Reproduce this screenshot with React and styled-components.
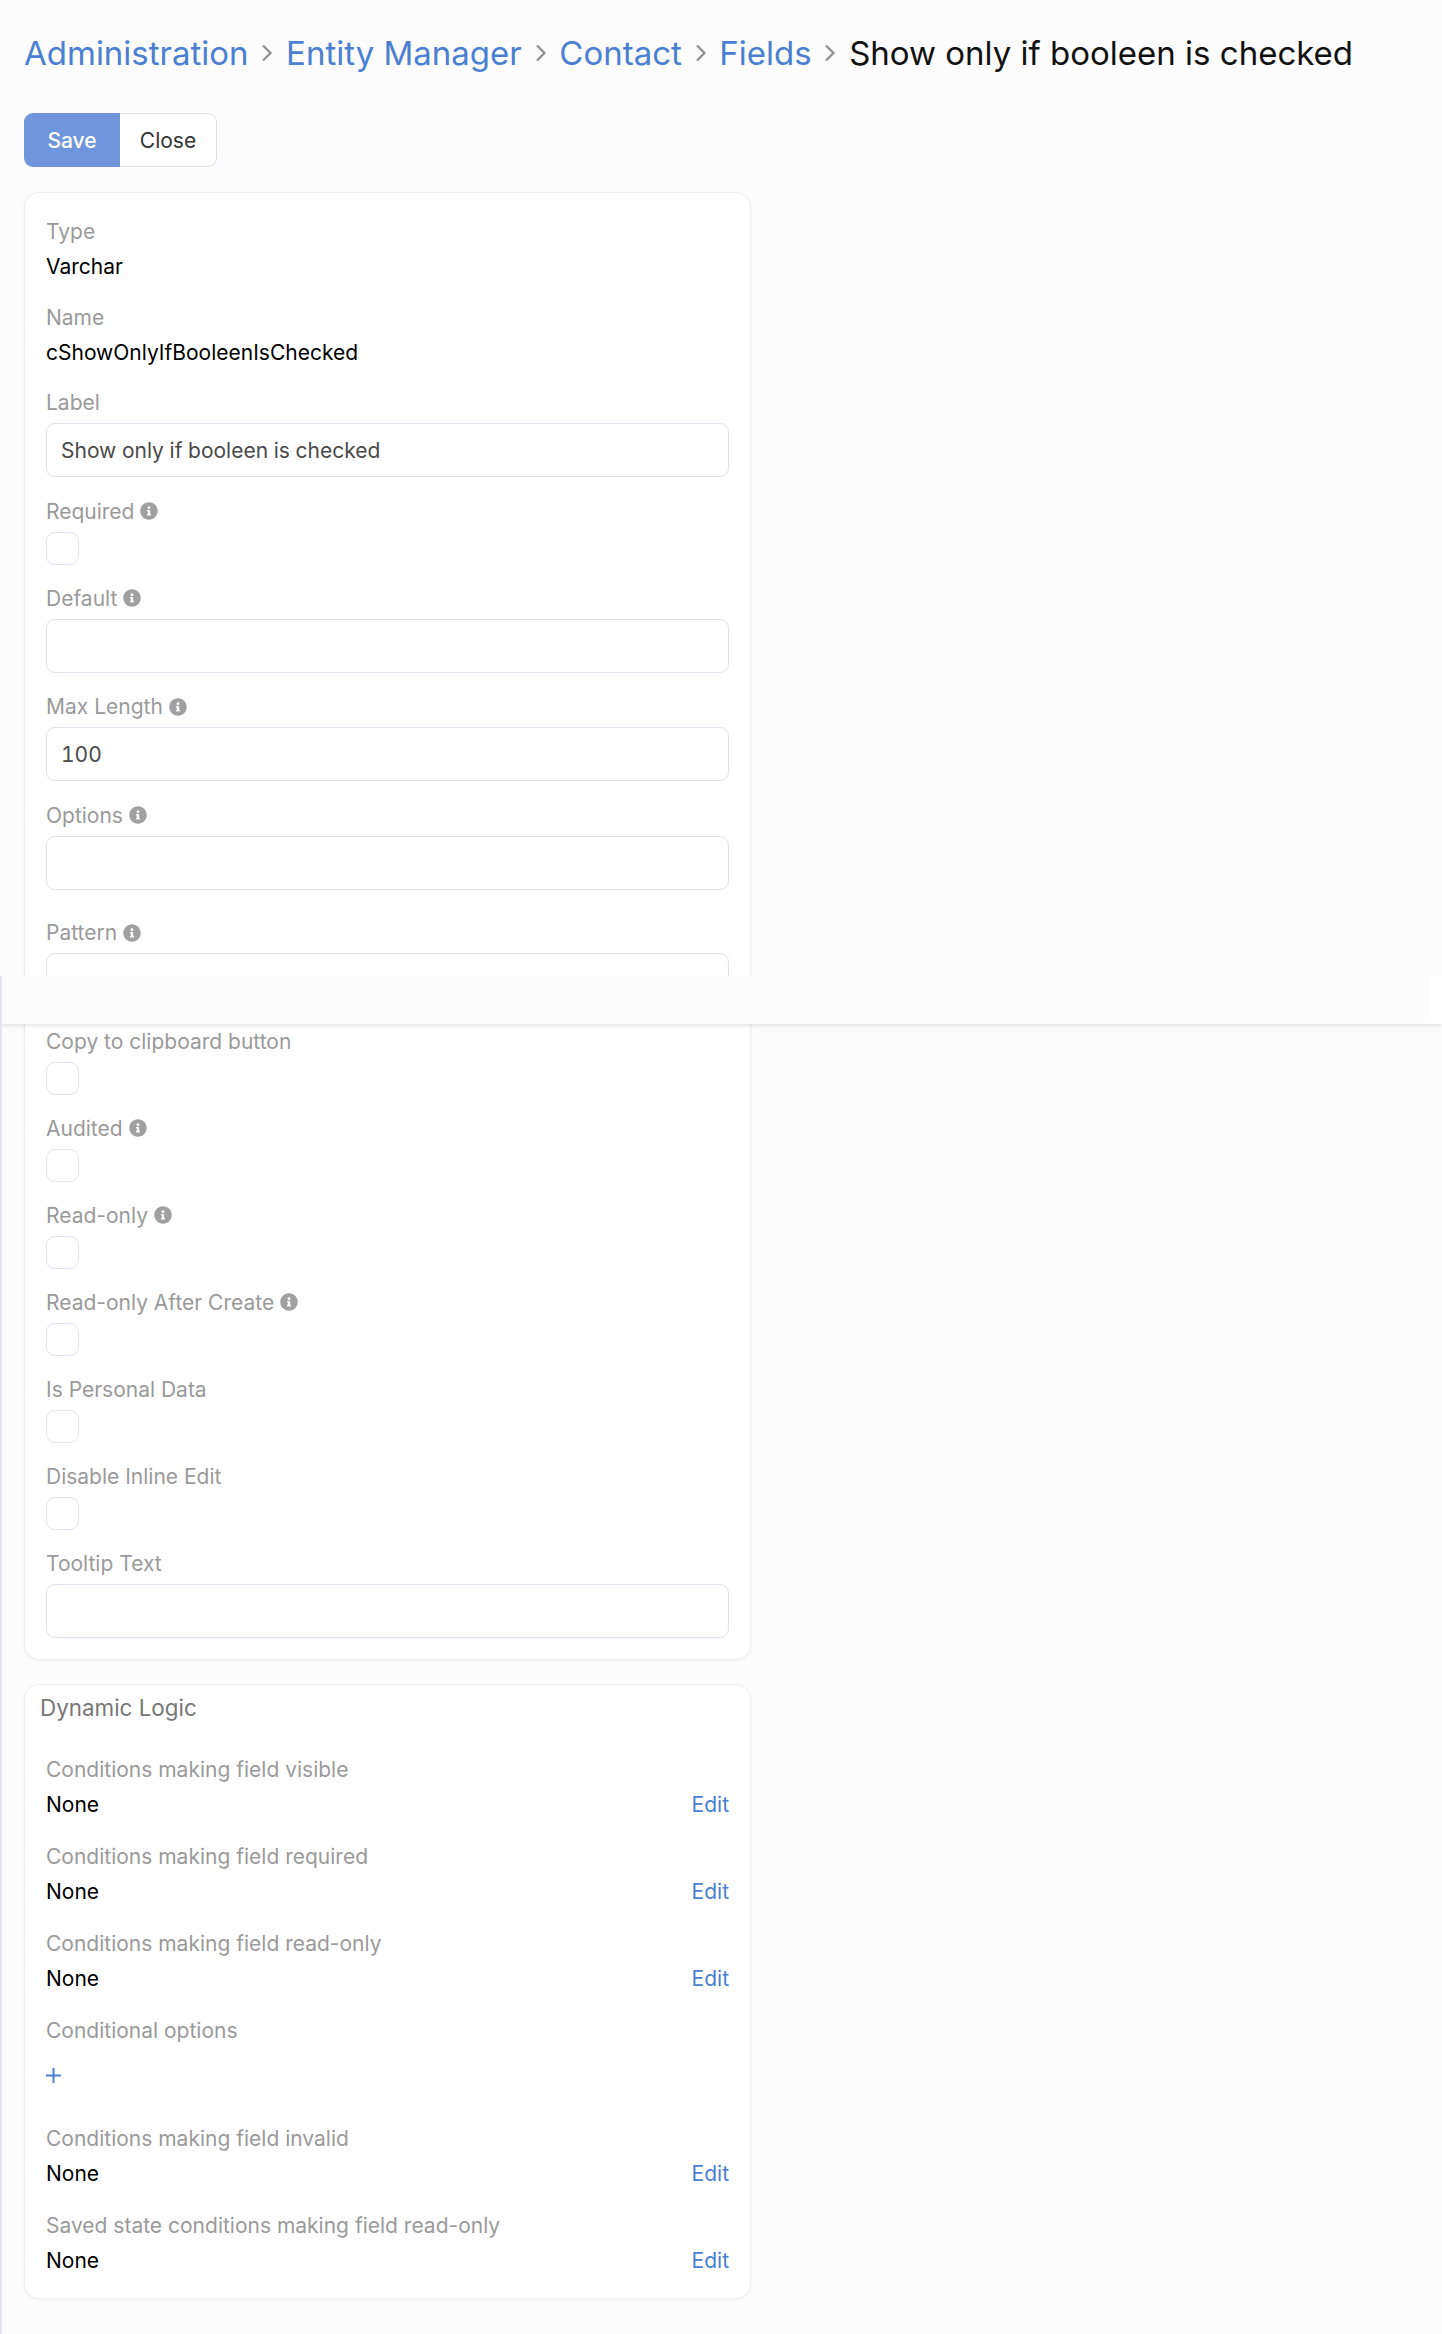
import React from 'react';
import styled, { createGlobalStyle } from 'styled-components';
import { FaInfoCircle } from 'react-icons/fa';

const GlobalStyle = createGlobalStyle`
  html, body {
    margin: 0;
    background: #fcfcfc;
    font-family: Inter, "Liberation Sans", sans-serif;
  }
`;

const mainFields = [
  { kind: 'static', label: 'Type', value: 'Varchar' },
  { kind: 'static', label: 'Name', value: 'cShowOnlyIfBooleenIsChecked' },
  { kind: 'input', label: 'Label', value: 'Show only if booleen is checked' },
  { kind: 'check', label: 'Required', info: true },
  { kind: 'input', label: 'Default', info: true },
  { kind: 'input', label: 'Max Length', info: true, value: '100' },
  { kind: 'input', label: 'Options', info: true, spaced: true },
  { kind: 'input', label: 'Pattern', info: true },
  { kind: 'check', label: 'Copy to clipboard button' },
  { kind: 'check', label: 'Audited', info: true },
  { kind: 'check', label: 'Read-only', info: true },
  { kind: 'check', label: 'Read-only After Create', info: true },
  { kind: 'check', label: 'Is Personal Data' },
  { kind: 'check', label: 'Disable Inline Edit' },
  { kind: 'input', label: 'Tooltip Text' },
];

const logicFields = [
  { label: 'Conditions making field visible' },
  { label: 'Conditions making field required' },
  { label: 'Conditions making field read-only' },
  { label: 'Conditional options', add: true },
  { label: 'Conditions making field invalid' },
  { label: 'Saved state conditions making field read-only' },
];

const crumbs = ['Administration', 'Entity Manager', 'Contact', 'Fields'];

const Chevron = () => (
  <svg width="12" height="20" viewBox="0 0 12 20" fill="none" stroke="currentColor" strokeWidth="2.2">
    <path d="M2 2.5l7.5 7.5L2 17.5" />
  </svg>
);

const PlusIcon = () => (
  <svg width="15" height="15" viewBox="0 0 15 15" stroke="currentColor" strokeWidth="2">
    <path d="M0 7.5h15M7.5 0v15" />
  </svg>
);

const App = () => (
  <>
    <GlobalStyle />
    <Page>
      <Breadcrumb>
        {crumbs.map((crumb) => (
          <React.Fragment key={crumb}>
            <CrumbLink>{crumb}</CrumbLink>
            <Separator><Chevron /></Separator>
          </React.Fragment>
        ))}
        <CrumbCurrent>Show only if booleen is checked</CrumbCurrent>
      </Breadcrumb>

      <Buttons>
        <SaveButton>Save</SaveButton>
        <CloseButton>Close</CloseButton>
      </Buttons>

      <Panel>
        {mainFields.map((field) => (
          <Field key={field.label} $spaced={field.spaced}>
            <Label>
              {field.label}
              {field.info && <InfoIcon><FaInfoCircle /></InfoIcon>}
            </Label>
            {field.kind === 'static' && <Value>{field.value}</Value>}
            {field.kind === 'input' && <TextInput readOnly value={field.value || ''} />}
            {field.kind === 'check' && <CheckBox />}
          </Field>
        ))}
      </Panel>

      <LogicPanel>
        <PanelTitle>Dynamic Logic</PanelTitle>
        {logicFields.map((field) => (
          <Field key={field.label}>
            <Label>{field.label}</Label>
            {field.add ? (
              <AddLink><PlusIcon /></AddLink>
            ) : (
              <LogicRow>
                <Value>None</Value>
                <EditLink>Edit</EditLink>
              </LogicRow>
            )}
          </Field>
        ))}
      </LogicPanel>

      <StickyBand>
        <BandCorner />
      </StickyBand>
      <EdgeLine />
    </Page>
  </>
);

export default App;

const Page = styled.div`
  position: relative;
  height: 2334px;
  box-sizing: border-box;
  padding: 24px 24px 0;
  overflow: hidden;
`;

const Breadcrumb = styled.div`
  display: flex;
  align-items: center;
  height: 58px;
  margin-bottom: 31px;
  font-size: 33px;
  line-height: 58px;
`;

const CrumbLink = styled.a`
  color: #4a7fd2;
`;

const CrumbCurrent = styled.span`
  color: #111;
`;

const Separator = styled.span`
  display: flex;
  width: 37.5px;
  justify-content: center;
  color: #8f8f8f;
`;

const Buttons = styled.div`
  display: flex;
  margin-bottom: 25px;
`;

const SaveButton = styled.button`
  width: 96px;
  height: 54px;
  border: 0;
  border-radius: 9px 0 0 9px;
  background: #6f95dc;
  color: #fff;
  font: 500 21px Inter, sans-serif;
`;

const CloseButton = styled.button`
  width: 97px;
  height: 54px;
  border: 1px solid #dcdfe8;
  border-left: 0;
  border-radius: 0 9px 9px 0;
  background: #fff;
  color: #333;
  font: 400 21px Inter, sans-serif;
`;

const Panel = styled.div`
  width: 727px;
  box-sizing: border-box;
  padding: 24px 21px 21px 21px;
  border: 1px solid #eeeeee;
  border-radius: 15px;
  background: #fff;
  box-shadow: 0 1px 3px rgba(0, 0, 0, 0.05);
`;

const LogicPanel = styled(Panel)`
  margin-top: 24px;
  padding-top: 9px;
  padding-bottom: 20px;
`;

const PanelTitle = styled.div`
  margin: 0 0 33px -6px;
  color: #777;
  font-size: 22.4px;
  line-height: 28px;
`;

const Field = styled.div`
  margin-bottom: ${(props) => (props.$spaced ? '28.5px' : '19.5px')};

  &:last-child {
    margin-bottom: 0;
  }
`;

const Label = styled.div`
  display: flex;
  align-items: center;
  gap: 6px;
  height: 29px;
  margin-bottom: 6px;
  color: #9a9a9a;
  font-size: 21px;
`;

const InfoIcon = styled.span`
  display: flex;
  color: #a0a0a0;
  font-size: 18px;
`;

const Value = styled.div`
  margin: -2px 0 1.5px;
  color: #000;
  font-size: 21px;
  line-height: 33px;
`;

const TextInput = styled.input`
  display: block;
  width: 100%;
  height: 54px;
  box-sizing: border-box;
  padding: 0 14px;
  border: 1px solid #dfe1ee;
  border-radius: 9px;
  background: #fff;
  color: #4a4a4a;
  font: 400 21px Inter, sans-serif;
  font-variant-numeric: tabular-nums;
  outline: none;
`;

const CheckBox = styled.div`
  width: 33px;
  height: 33px;
  margin-bottom: -0.4px;
  box-sizing: border-box;
  border: 1px solid #e2e2f2;
  border-radius: 9px;
  background: #fff;
`;

const LogicRow = styled.div`
  display: flex;
  justify-content: space-between;
`;

const EditLink = styled.a`
  margin-top: -2px;
  color: #4a7fd2;
  font-size: 21px;
  line-height: 33px;
`;

const AddLink = styled.a`
  display: block;
  height: 53px;
  padding-top: 16px;
  box-sizing: border-box;
  color: #4a7fd2;
`;

const StickyBand = styled.div`
  position: absolute;
  top: 976px;
  left: 2px;
  right: 0;
  height: 48px;
  background: #fcfcfc;
  box-shadow: 0 2px 4px rgba(0, 0, 0, 0.1);
`;

const BandCorner = styled.div`
  position: absolute;
  top: 1px;
  right: 0;
  bottom: 0;
  width: 12px;
  border-radius: 0 0 0 8px;
  background: #fff;
`;

const EdgeLine = styled.div`
  position: absolute;
  top: 976px;
  left: 0;
  bottom: 0;
  width: 2px;
  background: #e6e6f6;
`;
